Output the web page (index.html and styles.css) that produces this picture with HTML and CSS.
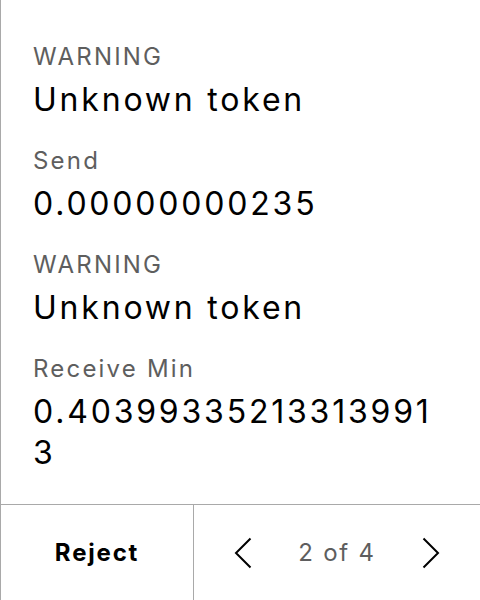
FILE: index.html
```html
<!DOCTYPE html>
<html>
<head>
<meta charset="utf-8">
<link rel="stylesheet" href="styles.css">
</head>
<body>
<div class="screen">
  <main class="content">
    <section class="field">
      <div class="label">WARNING</div>
      <div class="value">Unknown token</div>
    </section>
    <section class="field">
      <div class="label">Send</div>
      <div class="value">0.00000000235</div>
    </section>
    <section class="field">
      <div class="label">WARNING</div>
      <div class="value">Unknown token</div>
    </section>
    <section class="field">
      <div class="label">Receive Min</div>
      <div class="value value-wrap">0.403993352133139913</div>
    </section>
  </main>
  <footer class="footer">
    <div class="reject">Reject</div>
    <div class="pager">
      <svg class="chev" width="18" height="32" viewBox="0 0 18 32"><path d="M16.5 1.5 L2 16 L16.5 30.5" fill="none" stroke="#000" stroke-width="2"/></svg>
      <span class="count">2 of 4</span>
      <svg class="chev" width="18" height="32" viewBox="0 0 18 32"><path d="M1.5 1.5 L16 16 L1.5 30.5" fill="none" stroke="#000" stroke-width="2"/></svg>
    </div>
  </footer>
</div>
</body>
</html>
```

FILE: styles.css
```css
html, body {
  margin: 0;
  padding: 0;
  background: #fff;
}
body {
  font-family: Inter, "Noto Sans", sans-serif;
  color: #000;
}
.screen {
  height: 600px;
  box-sizing: border-box;
  border-left: 1px solid #a9a9a9;
  display: flex;
  flex-direction: column;
}
.content {
  flex: 1;
  padding: 42px 32px 0 32px;
  display: flex;
  flex-direction: column;
  gap: 26px;
}
.label {
  font-size: 24px;
  line-height: 30px;
  letter-spacing: 2.2px;
  color: #5e5e5e;
  margin-bottom: 7px;
}
.value {
  font-size: 32px;
  line-height: 41px;
  letter-spacing: 2.8px;
  color: #000;
}
.value-wrap {
  word-break: break-all;
}
.footer {
  height: 96px;
  box-sizing: border-box;
  border-top: 1px solid #a9a9a9;
  display: flex;
}
.reject {
  width: 192px;
  border-right: 1px solid #a9a9a9;
  display: flex;
  align-items: center;
  justify-content: center;
  font-size: 24px;
  font-weight: 700;
  letter-spacing: 1.8px;
}
.pager {
  flex: 1;
  display: flex;
  align-items: center;
  justify-content: center;
  gap: 46px;
}
.count {
  font-size: 24px;
  letter-spacing: 1.8px;
  color: #5e5e5e;
}
.chev {
  display: block;
}
```
